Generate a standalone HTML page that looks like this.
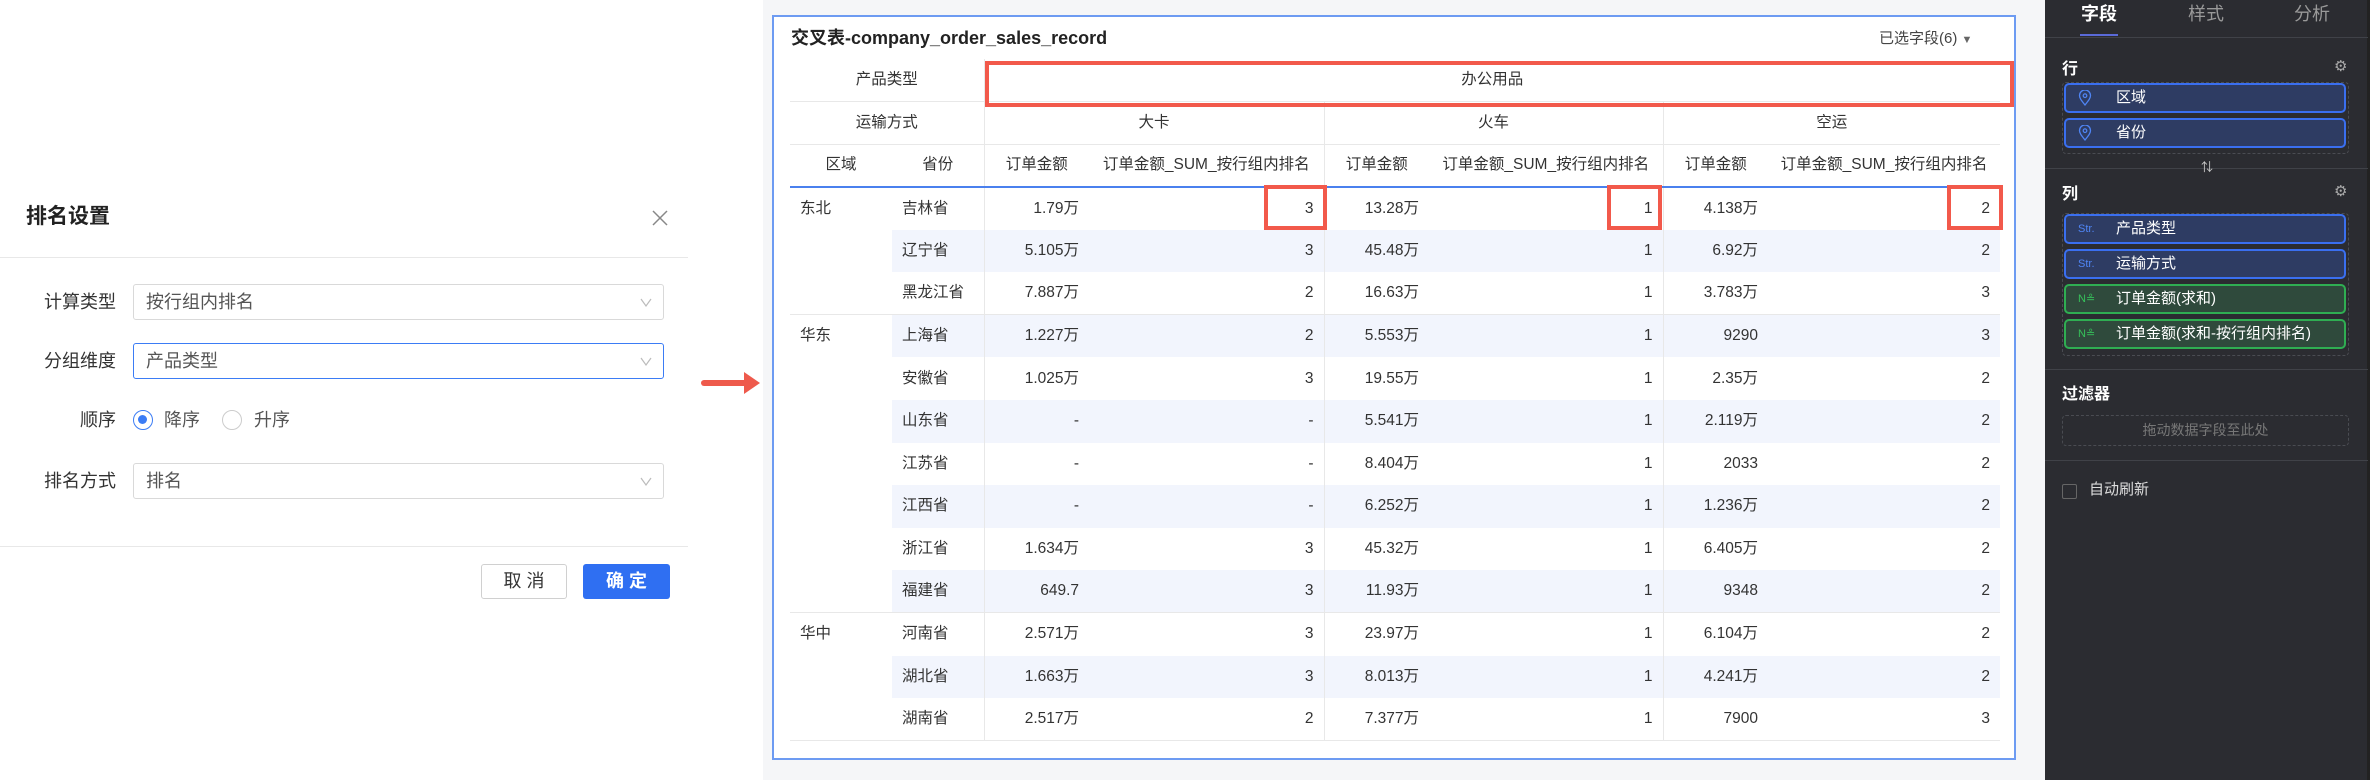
<!DOCTYPE html>
<html><head><meta charset="utf-8"><style>
*{margin:0;padding:0;box-sizing:border-box}
body{width:2370px;height:780px;position:relative;overflow:hidden;background:#fff;font-family:"Liberation Sans","Noto Sans CJK SC",sans-serif;color:#333;line-height:1.25}
.abs{position:absolute}
.lbl{position:absolute;font-size:18px;color:#333;text-align:right;width:110px;left:6px;line-height:24px}
.inp{position:absolute;left:133px;width:531px;height:36px;border:1px solid #d9d9d9;border-radius:3px;font-size:18px;color:#555;padding:0 12px;line-height:34px}
.inp .ch{position:absolute;right:10px;top:10px;width:14px;height:14px}
#gray{left:763px;top:0;width:1282px;height:780px;background:#f5f6f8}
#card{left:772px;top:15px;width:1244px;height:745px;background:#fff;border:2px solid #6d9bf2}
table{position:absolute;left:790px;top:59px;border-collapse:collapse;table-layout:fixed;font-size:15.5px}
td{padding:0 10px;white-space:nowrap;color:#333;line-height:20px;vertical-align:middle}
.h td{text-align:center;border-bottom:1px solid #e8e8e8}
.vl{border-left:1px solid #e8e8e8}
.d td{height:42.6px}
.n{text-align:right}
.s td.st{background:#f2f5fd}
.red{position:absolute;border:4px solid #f2594b}
#panel{left:2045px;top:0;width:325px;height:780px;background:#2b2c31}
.pill{position:absolute;left:2064px;width:282px;height:30px;border-radius:5px;font-size:15px;color:#fff;padding:0 0 0 50px;line-height:26px}
.pb{background:#2e3c63;border:2px solid #3a6ff0}
.pg{background:#2f4a3c;border:2px solid #2fae52}
.pill .ic{position:absolute;left:12px;top:0;font-size:11px;line-height:26px}
.pill svg.ic{top:5px}
.dash{position:absolute;border:1px dashed #4a4c52;border-radius:4px}
.hr{position:absolute;left:2045px;width:323px;height:1px;background:#404248}
</style></head><body>
<div class="abs" style="left:26px;top:204px;font-size:21px;font-weight:bold;color:#222">排名设置</div>
<svg class="abs" style="left:652px;top:210px" width="16" height="16"><path d="M1 1L15 15M15 1L1 15" stroke="#888" stroke-width="1.5"/></svg>
<div class="abs" style="left:0;top:257px;width:688px;height:1px;background:#e8e8e8"></div>
<div class="lbl" style="top:290px">计算类型</div>
<div class="inp" style="top:284px">按行组内排名<svg class="ch" viewBox="0 0 14 14"><path d="M2 4L7 11L12 4" fill="none" stroke="#bbb" stroke-width="1.2"/></svg></div>
<div class="lbl" style="top:349px">分组维度</div>
<div class="inp" style="top:343px;border-color:#3b7cf5">产品类型<svg class="ch" viewBox="0 0 14 14"><path d="M2 4L7 11L12 4" fill="none" stroke="#bbb" stroke-width="1.2"/></svg></div>
<div class="lbl" style="top:408px">顺序</div>
<div class="abs" style="left:133px;top:410px;width:20px;height:20px;border:1.5px solid #3b7cf5;border-radius:50%"><div style="margin:4px;width:9px;height:9px;border-radius:50%;background:#3b7cf5"></div></div>
<div class="abs" style="left:164px;top:408px;font-size:18px;color:#555;line-height:24px">降序</div>
<div class="abs" style="left:222px;top:410px;width:20px;height:20px;border:1px solid #ccc;border-radius:50%"></div>
<div class="abs" style="left:254px;top:408px;font-size:18px;color:#555;line-height:24px">升序</div>
<div class="lbl" style="top:469px">排名方式</div>
<div class="inp" style="top:463px">排名<svg class="ch" viewBox="0 0 14 14"><path d="M2 4L7 11L12 4" fill="none" stroke="#bbb" stroke-width="1.2"/></svg></div>
<div class="abs" style="left:0;top:546px;width:688px;height:1px;background:#e8e8e8"></div>
<div class="abs" style="left:481px;top:564px;width:86px;height:35px;border:1px solid #d0d0d0;border-radius:3px;font-size:18px;text-align:center;line-height:33px;color:#333">取 消</div>
<div class="abs" style="left:583px;top:564px;width:87px;height:35px;background:#2f6ff2;border-radius:3px;font-size:18px;text-align:center;line-height:35px;color:#fff;font-weight:bold">确 定</div>
<svg class="abs" style="left:700px;top:370px" width="62" height="26"><path d="M4 13H46" stroke="#ee5a4c" stroke-width="6" stroke-linecap="round"/><path d="M44 2L60 13L44 24Z" fill="#ee5a4c"/></svg>

<div class="abs" id="gray"></div>
<div class="abs" id="card"></div>
<div class="abs" style="left:791px;top:27px;font-size:18px;font-weight:bold;color:#222">交叉表-company_order_sales_record</div>
<div class="abs" style="left:1879px;top:30px;font-size:15px;color:#444">已选字段(6) <span style="font-size:11px;color:#666">▼</span></div>

<table>
<colgroup><col style="width:102px"><col style="width:92px"><col style="width:105px"><col style="width:235px"><col style="width:105px"><col style="width:234px"><col style="width:105px"><col style="width:232px"></colgroup>
<tr class="h" style="height:42px"><td colspan="2">产品类型</td><td colspan="6" class="vl">办公用品</td></tr>
<tr class="h" style="height:43px"><td colspan="2">运输方式</td><td colspan="2" class="vl">大卡</td><td colspan="2" class="vl">火车</td><td colspan="2" class="vl">空运</td></tr>
<tr class="h" style="height:43px;border-bottom:2px solid #4a80ee"><td>区域</td><td>省份</td><td class="vl">订单金额</td><td>订单金额_SUM_按行组内排名</td><td class="vl">订单金额</td><td>订单金额_SUM_按行组内排名</td><td class="vl">订单金额</td><td>订单金额_SUM_按行组内排名</td></tr>
<tr class="d"><td rowspan="3" style="vertical-align:top;padding-top:11px;border-bottom:1px solid #e8e8e8">东北</td><td>吉林省</td><td class="n vl">1.79万</td><td class="n">3</td><td class="n vl">13.28万</td><td class="n">1</td><td class="n vl">4.138万</td><td class="n">2</td></tr>
<tr class="d s"><td class="st">辽宁省</td><td class="n vl st">5.105万</td><td class="n st">3</td><td class="n vl st">45.48万</td><td class="n st">1</td><td class="n vl st">6.92万</td><td class="n st">2</td></tr>
<tr class="d" style="border-bottom:1px solid #e8e8e8"><td>黑龙江省</td><td class="n vl">7.887万</td><td class="n">2</td><td class="n vl">16.63万</td><td class="n">1</td><td class="n vl">3.783万</td><td class="n">3</td></tr>
<tr class="d s"><td rowspan="7" style="vertical-align:top;padding-top:11px;border-bottom:1px solid #e8e8e8">华东</td><td class="st">上海省</td><td class="n vl st">1.227万</td><td class="n st">2</td><td class="n vl st">5.553万</td><td class="n st">1</td><td class="n vl st">9290</td><td class="n st">3</td></tr>
<tr class="d"><td>安徽省</td><td class="n vl">1.025万</td><td class="n">3</td><td class="n vl">19.55万</td><td class="n">1</td><td class="n vl">2.35万</td><td class="n">2</td></tr>
<tr class="d s"><td class="st">山东省</td><td class="n vl st">-</td><td class="n st">-</td><td class="n vl st">5.541万</td><td class="n st">1</td><td class="n vl st">2.119万</td><td class="n st">2</td></tr>
<tr class="d"><td>江苏省</td><td class="n vl">-</td><td class="n">-</td><td class="n vl">8.404万</td><td class="n">1</td><td class="n vl">2033</td><td class="n">2</td></tr>
<tr class="d s"><td class="st">江西省</td><td class="n vl st">-</td><td class="n st">-</td><td class="n vl st">6.252万</td><td class="n st">1</td><td class="n vl st">1.236万</td><td class="n st">2</td></tr>
<tr class="d"><td>浙江省</td><td class="n vl">1.634万</td><td class="n">3</td><td class="n vl">45.32万</td><td class="n">1</td><td class="n vl">6.405万</td><td class="n">2</td></tr>
<tr class="d s" style="border-bottom:1px solid #e8e8e8"><td class="st">福建省</td><td class="n vl st">649.7</td><td class="n st">3</td><td class="n vl st">11.93万</td><td class="n st">1</td><td class="n vl st">9348</td><td class="n st">2</td></tr>
<tr class="d"><td rowspan="3" style="vertical-align:top;padding-top:11px;border-bottom:1px solid #e8e8e8">华中</td><td>河南省</td><td class="n vl">2.571万</td><td class="n">3</td><td class="n vl">23.97万</td><td class="n">1</td><td class="n vl">6.104万</td><td class="n">2</td></tr>
<tr class="d s"><td class="st">湖北省</td><td class="n vl st">1.663万</td><td class="n st">3</td><td class="n vl st">8.013万</td><td class="n st">1</td><td class="n vl st">4.241万</td><td class="n st">2</td></tr>
<tr class="d" style="border-bottom:1px solid #e8e8e8"><td>湖南省</td><td class="n vl">2.517万</td><td class="n">2</td><td class="n vl">7.377万</td><td class="n">1</td><td class="n vl">7900</td><td class="n">3</td></tr>
</table>
<div class="red" style="left:985px;top:61px;width:1029px;height:46px"></div>
<div class="red" style="left:1264px;top:185px;width:63px;height:45px"></div>
<div class="red" style="left:1607px;top:185px;width:55px;height:45px"></div>
<div class="red" style="left:1947px;top:185px;width:56px;height:45px"></div>

<div class="abs" id="panel"></div>
<div class="abs" style="left:2367px;top:0;width:3px;height:780px;background:#222"></div>
<div class="abs" style="left:2081px;top:3px;font-size:18px;color:#fff;font-weight:bold">字段</div>
<div class="abs" style="left:2188px;top:3px;font-size:18px;color:#999">样式</div>
<div class="abs" style="left:2294px;top:3px;font-size:18px;color:#999">分析</div>
<div class="abs" style="left:2080px;top:34px;width:38px;height:2px;background:#5a6ad8"></div>
<div class="hr" style="top:37px"></div>
<div class="abs" style="left:2062px;top:60px;font-size:16px;color:#fff;font-weight:bold">行</div>
<div class="abs" style="left:2334px;top:58px;font-size:15px;color:#aaa">⚙</div>
<div class="dash" style="left:2062px;top:82px;width:287px;height:72px"></div>
<div class="pill pb" style="top:83px"><svg class="ic" width="14" height="16" viewBox="0 0 14 16"><path d="M7 15C3 10 1.5 8 1.5 5.5a5.5 5.5 0 0111 0C12.5 8 11 10 7 15Z" fill="none" stroke="#4f85f5" stroke-width="1.3"/><circle cx="7" cy="5.7" r="1.8" fill="none" stroke="#4f85f5" stroke-width="1.2"/></svg>区域</div>
<div class="pill pb" style="top:118px"><svg class="ic" width="14" height="16" viewBox="0 0 14 16"><path d="M7 15C3 10 1.5 8 1.5 5.5a5.5 5.5 0 0111 0C12.5 8 11 10 7 15Z" fill="none" stroke="#4f85f5" stroke-width="1.3"/><circle cx="7" cy="5.7" r="1.8" fill="none" stroke="#4f85f5" stroke-width="1.2"/></svg>省份</div>
<div class="hr" style="top:168px"></div>
<div class="abs" style="left:2201px;top:160px;font-size:12px;color:#ccc">⇅</div>
<div class="abs" style="left:2062px;top:185px;font-size:16px;color:#fff;font-weight:bold">列</div>
<div class="abs" style="left:2334px;top:183px;font-size:15px;color:#aaa">⚙</div>
<div class="dash" style="left:2062px;top:213px;width:287px;height:143px"></div>
<div class="pill pb" style="top:214px"><span class="ic" style="color:#4f85f5">Str.</span>产品类型</div>
<div class="pill pb" style="top:249px"><span class="ic" style="color:#4f85f5">Str.</span>运输方式</div>
<div class="pill pg" style="top:284px"><span class="ic" style="color:#36c05a">N≗</span>订单金额(求和)</div>
<div class="pill pg" style="top:319px"><span class="ic" style="color:#36c05a">N≗</span>订单金额(求和-按行组内排名)</div>
<div class="hr" style="top:369px"></div>
<div class="abs" style="left:2062px;top:385px;font-size:16px;color:#fff;font-weight:bold">过滤器</div>
<div class="dash" style="left:2062px;top:415px;width:287px;height:31px;text-align:center;font-size:14px;color:#777;line-height:29px">拖动数据字段至此处</div>
<div class="hr" style="top:460px"></div>
<div class="abs" style="left:2062px;top:484px;width:15px;height:15px;border:1px solid #666;border-radius:2px"></div>
<div class="abs" style="left:2089px;top:481px;font-size:15px;color:#ddd">自动刷新</div>
</body></html>
